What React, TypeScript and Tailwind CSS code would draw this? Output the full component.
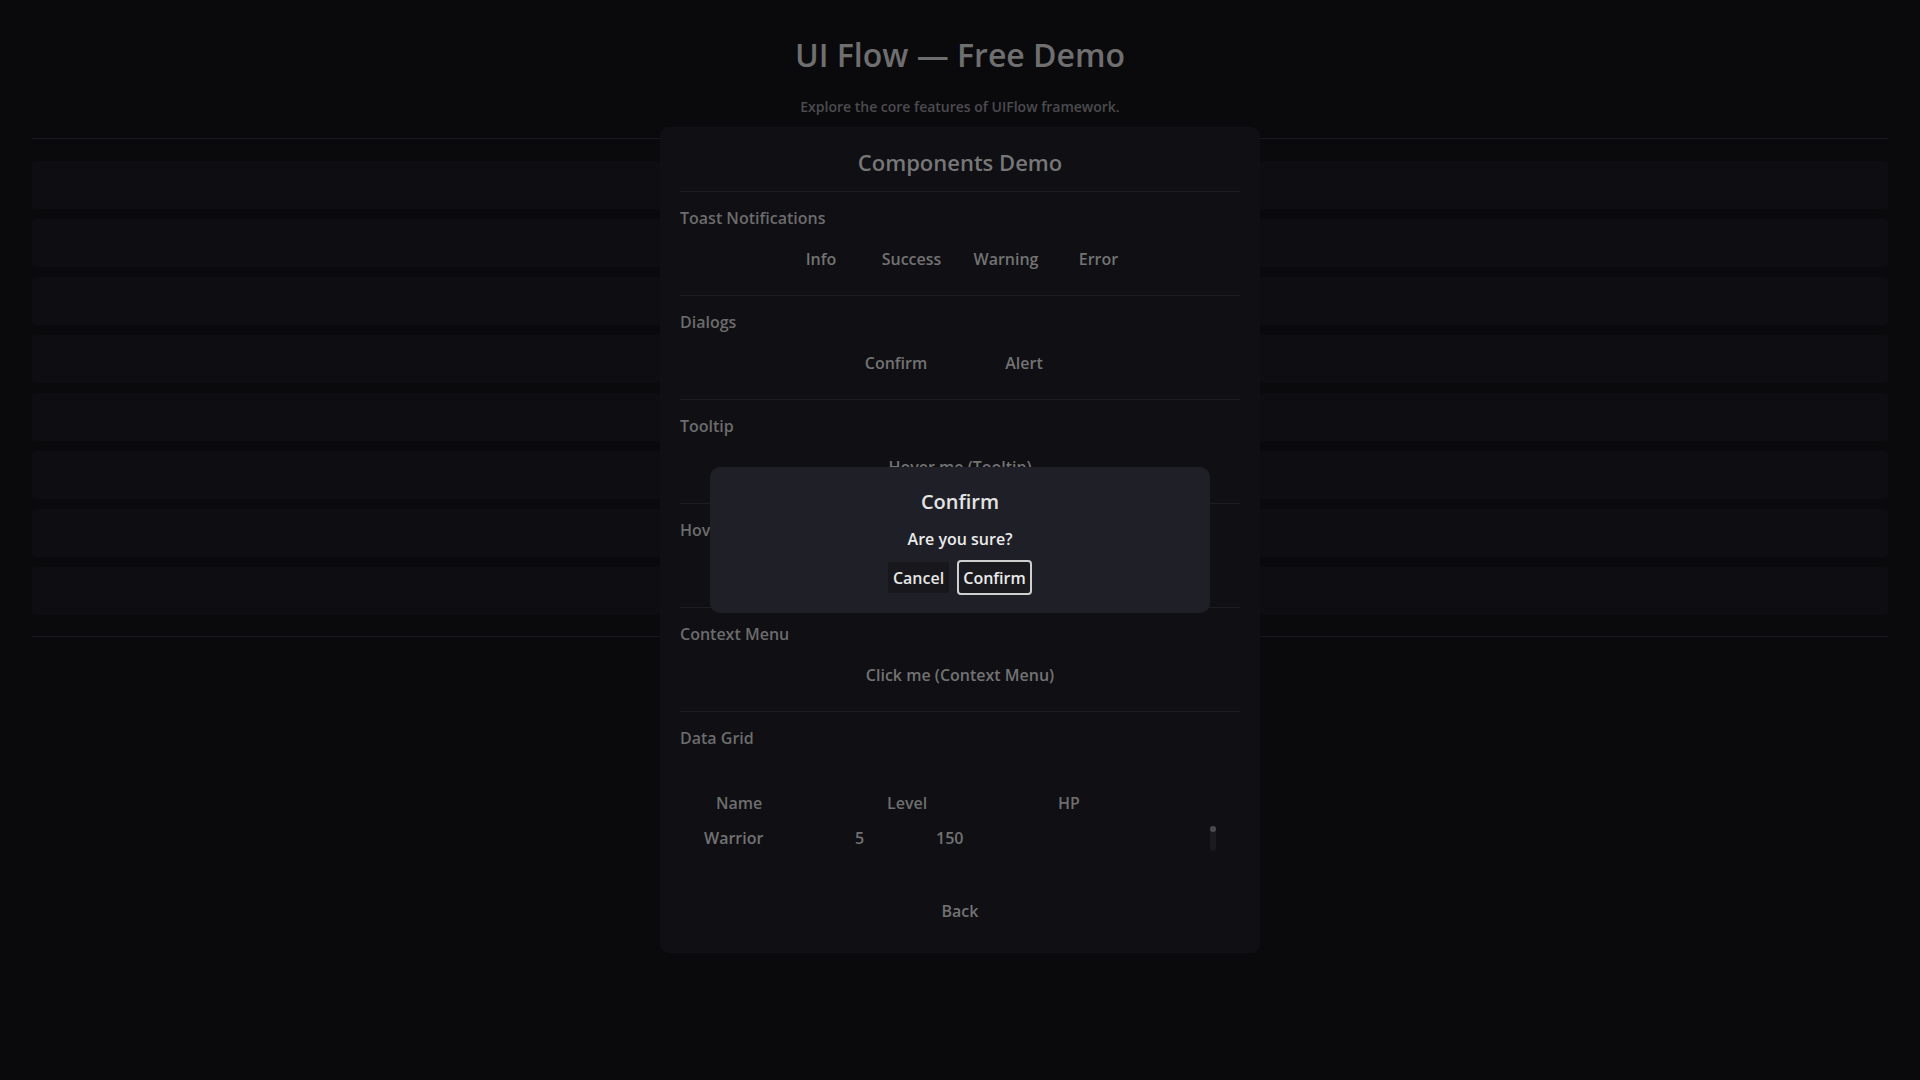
import React from 'react';

type SectionProps = {
  title: string;
  children: React.ReactNode;
};

const toastKinds = [
  { label: 'Info', width: 'w-[80px]' },
  { label: 'Success', width: 'w-[85px]' },
  { label: 'Warning', width: 'w-[88px]' },
  { label: 'Error', width: 'w-[81px]' },
];
const menuRows = Array.from({ length: 8 }, (_, i) => i);

// flat text-only button used across the demo panel
const FlatButton: React.FC<{ label: string; className?: string }> = ({ label, className = '' }) => (
  <button className={`flex h-[31px] items-center justify-center text-[16px] text-[#737373] ${className}`}>
    {label}
  </button>
);

const Section: React.FC<SectionProps> = ({ title, children }) => (
  <div className="border-t border-[#1c1c22] pt-[15px] pb-[21px]">
    <div className="text-[16px] leading-[22px] text-[#6c6c6c]">{title}</div>
    <div className="mt-[14px] flex h-[31px] items-center justify-center gap-2">{children}</div>
  </div>
);

const ConfirmDialog: React.FC = () => (
  <div className="absolute left-[710px] top-[467px] flex w-[500px] flex-col items-center rounded-[10px] bg-[#1e1f27] pt-[21px] pb-[18px]">
    <h3 className="text-[20px] leading-[28px] text-[#e4e4e4]">Confirm</h3>
    <p className="mt-[12px] text-[16px] leading-[22px] text-[#ebebeb]">Are you sure?</p>
    <div className="mt-[10px] flex items-center gap-2">
      <button className="flex h-[31px] w-[61px] items-center justify-center bg-[#18181c] text-[16px] text-[#e6e6e6]">
        Cancel
      </button>
      <button className="flex h-[35px] w-[75px] items-center justify-center rounded-[4px] border-2 border-[#cfcfcf] bg-[#1a1a1f] text-[16px] text-[#ebebeb]">
        Confirm
      </button>
    </div>
  </div>
);

const App: React.FC = () => {
  return (
    <div className="relative h-[1080px] w-[1920px] overflow-hidden bg-[#0a0a0d] font-['Open_Sans',sans-serif] font-semibold">
      {/* main menu underneath */}
      <div className="flex flex-col items-center pt-[33px]">
        <h1 className="text-[32px] leading-[44px] text-[#6f6f6f]">UI Flow — Free Demo</h1>
        <p className="mt-[20px] text-[14px] leading-[20px] text-[#4c4c4f]">
          Explore the core features of UIFlow framework.
        </p>
      </div>
      <div className="mx-[32px] mt-[21px] h-px bg-[#1b1b1f]" />
      <div className="mx-[32px] flex flex-col gap-[10px] pt-[22px] pb-[21px]">
        {menuRows.map((row) => (
          <div key={row} className="h-[48px] rounded-[4px] bg-[#0e0e12]" />
        ))}
      </div>
      <div className="mx-[32px] h-px bg-[#1b1b1f]" />

      {/* components demo panel */}
      <div className="absolute left-[660px] top-[127px] flex h-[826px] w-[600px] flex-col rounded-[8px] bg-[#0f0f14] px-5">
        <h2 className="pt-[20px] text-center text-[22px] leading-[30px] text-[#777777]">Components Demo</h2>
        <div className="mt-[14px]">
          <Section title="Toast Notifications">
            {toastKinds.map((kind) => (
              <FlatButton key={kind.label} label={kind.label} className={kind.width} />
            ))}
          </Section>
          <Section title="Dialogs">
            <FlatButton label="Confirm" className="w-[120px]" />
            <FlatButton label="Alert" className="w-[120px]" />
          </Section>
          <Section title="Tooltip">
            <FlatButton label="Hover me (Tooltip)" className="px-2" />
          </Section>
          <Section title="Hover Card">
            <FlatButton label="Hover me (Hover Card)" className="px-2" />
          </Section>
          <Section title="Context Menu">
            <FlatButton label="Click me (Context Menu)" className="px-2" />
          </Section>
          <div className="border-t border-[#1c1c22] pt-[15px]">
            <div className="text-[16px] leading-[22px] text-[#6c6c6c]">Data Grid</div>
            {/* grid: header, one row and its scrollbar */}
            <div className="relative mt-[43px]">
              <div className="flex pl-[36px] text-[16px] leading-[22px] text-[#6e6e6e]">
                <span className="w-[171px]">Name</span>
                <span className="w-[171px]">Level</span>
                <span>HP</span>
              </div>
              <div className="mt-[13px] flex pl-[24px] text-[16px] leading-[22px] text-[#727272]">
                <span className="w-[151px]">Warrior</span>
                <span className="w-[81px]">5</span>
                <span>150</span>
              </div>
              <div className="absolute left-[530px] top-[34px] h-[25px] w-[6px] rounded-full bg-[#1a1a20]">
                <div className="h-[6px] w-[6px] rounded-full bg-[#4a4a50]" />
              </div>
            </div>
            <div className="mt-[46px] flex justify-center">
              <FlatButton label="Back" className="px-2" />
            </div>
          </div>
        </div>
      </div>

      <ConfirmDialog />
    </div>
  );
};

export default App;
